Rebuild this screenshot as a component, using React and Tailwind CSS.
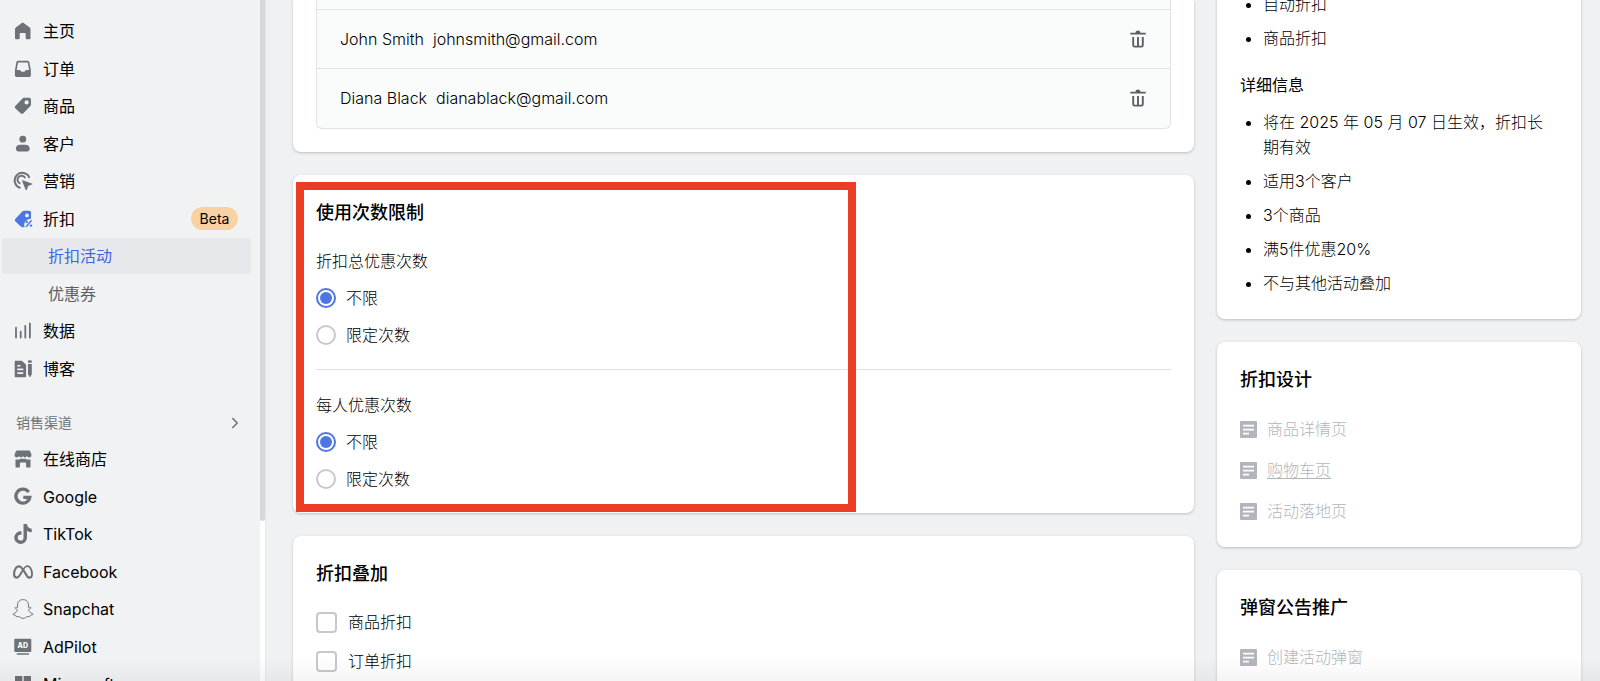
import { useState } from 'react'
import { ChevronRight } from 'lucide-react'
import { FaGoogle, FaTiktok, FaSnapchatGhost } from 'react-icons/fa'
import { SiMeta } from 'react-icons/si'

const MENU = [
  { label: '主页', icon: HomeIcon },
  { label: '订单', icon: InboxIcon },
  { label: '商品', icon: TagIcon },
  { label: '客户', icon: UserIcon },
  { label: '营销', icon: TargetIcon },
  { label: '折扣', icon: DiscountIcon, badge: 'Beta', active: true },
  { label: '折扣活动', sub: true, active: true },
  { label: '优惠券', sub: true },
  { label: '数据', icon: ChartIcon },
  { label: '博客', icon: BlogIcon },
]

const CHANNELS = [
  { label: '在线商店', icon: StoreIcon },
  { label: 'Google', icon: GoogleIcon },
  { label: 'TikTok', icon: TikTokIcon },
  { label: 'Facebook', icon: MetaIcon },
  { label: 'Snapchat', icon: SnapchatIcon },
  { label: 'AdPilot', icon: AdIcon },
  { label: 'Microsoft', icon: MicrosoftIcon },
]

const CUSTOMERS = [
  { name: 'John Smith', email: 'johnsmith@gmail.com' },
  { name: 'Diana Black', email: 'dianablack@gmail.com' },
]

const SUMMARY = ['自动折扣', '商品折扣']
const DETAILS = ['将在 2025 年 05 月 07 日生效，折扣长期有效', '适用3个客户', '3个商品', '满5件优惠20%', '不与其他活动叠加']

export default function App() {
  const [customers, setCustomers] = useState(CUSTOMERS)
  const [total, setTotal] = useState('unlimited')
  const [perUser, setPerUser] = useState('unlimited')

  return (
    <div className="relative flex h-screen overflow-hidden bg-[#f0f1f3] font-['Inter','Noto_Sans_CJK_SC',sans-serif] text-base font-light text-black">
      <Sidebar />

      <main className="flex min-w-0 flex-1 items-start gap-[23px] pl-[27px] pr-[19px]">
        <div className="flex min-w-0 flex-1 flex-col gap-[23px]">
          <section className="rounded-b-lg bg-white px-[23px] pb-[23px] shadow-[0_1px_3px_rgba(0,0,0,0.22)]">
            <ul className="rounded-b-md border border-t-0 border-[#e1e3e5] bg-[#fafcfc] pt-[9px] pb-px">
              {customers.map(c => (
                <li key={c.email} className="flex h-[59px] items-center border-t border-[#e1e3e5] pr-[22px] pl-[23px]">
                  <span className="mr-[9px]">{c.name}</span>
                  <span>{c.email}</span>
                  <button
                    aria-label={`删除 ${c.name}`}
                    onClick={() => setCustomers(list => list.filter(x => x.email !== c.email))}
                    className="ml-auto text-[#5c5f66]"
                  >
                    <TrashIcon />
                  </button>
                </li>
              ))}
            </ul>
          </section>

          <Card className="relative pt-6 pb-[22px]">
            <CardTitle>使用次数限制</CardTitle>
            <LimitGroup className="mt-[22px]" name="total" label="折扣总优惠次数" value={total} onChange={setTotal} />
            <hr className="mt-[22px] mb-[23px] border-[#dfe1e3]" />
            <LimitGroup name="per-user" label="每人优惠次数" value={perUser} onChange={setPerUser} />
            <div className="pointer-events-none absolute top-[7px] left-[3px] h-[330px] w-[560px] border-8 border-[#eb3d24]" />
          </Card>

          <Card className="min-h-[200px] pt-6">
            <CardTitle>折扣叠加</CardTitle>
            <div className="mt-[22px] flex flex-col gap-[15px]">
              {['商品折扣', '订单折扣'].map(text => (
                <label key={text} className="flex h-6 items-center gap-[11px]">
                  <input type="checkbox" className="size-[21px] appearance-none rounded-[4px] border-2 border-[#c6c8cc] bg-white checked:border-[#4f75e5] checked:bg-[#4f75e5]" />
                  {text}
                </label>
              ))}
            </div>
          </Card>
        </div>

        <aside className="-mt-2 flex w-[364px] flex-col gap-[23px]">
          <Card className="pb-[23px]">
            <BulletList items={SUMMARY} />
            <h3 className="mt-[22px] mb-[13px] leading-6 font-normal">详细信息</h3>
            <BulletList items={DETAILS} />
          </Card>

          <Card className="pt-6 pb-6">
            <CardTitle>折扣设计</CardTitle>
            <div className="mt-[23px] flex flex-col gap-[17px]">
              <PageLink>商品详情页</PageLink>
              <PageLink underline>购物车页</PageLink>
              <PageLink>活动落地页</PageLink>
            </div>
          </Card>

          <Card className="min-h-[200px] pt-6">
            <CardTitle>弹窗公告推广</CardTitle>
            <div className="mt-[23px]">
              <PageLink>创建活动弹窗</PageLink>
            </div>
          </Card>
        </aside>
      </main>

      <div className="pointer-events-none absolute inset-x-0 bottom-0 h-6 bg-linear-to-b from-transparent to-black/4" />
    </div>
  )
}

function Sidebar() {
  return (
    <div className="flex w-[266px] shrink-0 border-r border-[#e4e6e9] bg-[#f0f2f4]">
      <nav className="min-w-0 flex-1">
        <ul className="grid h-[388px] auto-rows-fr pt-[13px]">
          {MENU.map(item => <NavItem key={item.label} {...item} />)}
        </ul>
        <button className="mt-[25px] flex h-5 w-full items-center justify-between px-4 text-sm font-normal text-[#6d7178]">
          销售渠道
          <ChevronRight size={18} strokeWidth={2} />
        </button>
        <ul className="mt-[8px] grid h-[263px] auto-rows-fr">
          {CHANNELS.map(item => <NavItem key={item.label} {...item} />)}
        </ul>
      </nav>
      <div className="w-[5px] bg-white">
        <div className="h-[521px] rounded-b-sm bg-[#d5d7db]" />
      </div>
    </div>
  )
}

function NavItem({ label, icon: Icon, badge, sub, active }) {
  if (sub) {
    return (
      <li className="pr-[9px] pl-[2px]">
        <a
          href="#"
          className={`flex h-9 items-center rounded-[3px] pl-[46px] font-normal ${active ? 'bg-[#e6e8ec] text-[#3f66e0]' : 'text-[#5c5f66]'}`}
        >
          {label}
        </a>
      </li>
    )
  }
  return (
    <li className="pr-[22px] pl-[13px]">
      <a href="#" className="flex h-9 items-center gap-[10px] font-normal">
        <span className={active ? 'text-[#4f75e5]' : 'text-[#6d7178]'}><Icon /></span>
        {label}
        {badge && (
          <span className="ml-auto flex h-[23px] w-[47px] items-center justify-center rounded-full bg-[#f9d2a3] text-sm">
            {badge}
          </span>
        )}
      </a>
    </li>
  )
}

function Card({ className = '', children }) {
  return (
    <section className={`rounded-lg bg-white px-[23px] shadow-[0_1px_3px_rgba(0,0,0,0.22)] ${className}`}>
      {children}
    </section>
  )
}

function CardTitle({ children }) {
  return <h2 className="text-lg leading-7 font-medium">{children}</h2>
}

function LimitGroup({ name, label, value, onChange, className = '' }) {
  const options = [
    { id: 'unlimited', text: '不限' },
    { id: 'limited', text: '限定次数' },
  ]
  return (
    <fieldset className={`flex flex-col gap-[13px] ${className}`}>
      <legend className="mb-[13px] leading-6">{label}</legend>
      {options.map(o => (
        <label key={o.id} className="flex h-6 items-center gap-[10px]">
          <input
            type="radio"
            name={name}
            checked={value === o.id}
            onChange={() => onChange(o.id)}
            className="size-5 appearance-none rounded-full border-2 border-[#c6c8cc] bg-white bg-clip-content p-[2px] checked:border-[#4f75e5] checked:bg-[#4f75e5]"
          />
          {o.text}
        </label>
      ))}
    </fieldset>
  )
}

function BulletList({ items }) {
  return (
    <ul className="flex list-disc flex-col gap-[9px] pl-[23px] leading-[25px]">
      {items.map(text => <li key={text}>{text}</li>)}
    </ul>
  )
}

function PageLink({ underline, children }) {
  return (
    <a href="#" className="flex h-6 items-center gap-[10px] text-[#b2b5bb]">
      <PageIcon />
      <span className={underline ? 'underline underline-offset-2' : ''}>{children}</span>
    </a>
  )
}

function Svg({ children, ...props }) {
  return (
    <svg width="20" height="20" viewBox="0 0 20 20" fill="currentColor" {...props}>
      {children}
    </svg>
  )
}

function HomeIcon() {
  return (
    <Svg>
      <path d="M8.8 1.9a1.4 1.4 0 0 1 1.8 0l6.1 4.5c.5.4.8 1 .8 1.6V17a1.2 1.2 0 0 1-1.2 1.2h-2.4A1.2 1.2 0 0 1 12.7 17v-3.9a1 1 0 0 0-1-1H7.7a1 1 0 0 0-1 1V17a1.2 1.2 0 0 1-1.2 1.2H3.2A1.2 1.2 0 0 1 2 17V8c0-.6.3-1.2.8-1.6z" />
    </Svg>
  )
}

function InboxIcon() {
  return (
    <Svg fillRule="evenodd">
      <path d="M5.2 1.800h9.200c1 0 1.800.6 2 1.600l1.500 8.100v4.700c0 1-.8 1.800-1.800 1.800H3.700c-1 0-1.800-.8-1.800-1.800v-4.700l1.400-8.100c.2-1 1-1.600 1.900-1.600zm.3 1.800c-.3 0-.5.2-.6.5L3.700 11h2.600c.6 0 1 .3 1.300.8l.3.5c.2.3.5.5.9.5h2.200c.4 0 .7-.2.9-.5l.3-.5c.3-.5.7-.8 1.300-.8h2.600l-1.200-6.900c-.1-.3-.3-.5-.6-.5z" />
    </Svg>
  )
}

function TagIcon() {
  return (
    <Svg fillRule="evenodd">
      <path d="M11 1.800h5.200c1 0 1.800.8 1.800 1.800v5c0 .5-.2 1-.6 1.400l-7 7.200c-.8.8-2 .8-2.800 0l-5.100-4.700c-.8-.8-.8-2 0-2.800l7-7.300c.4-.4.9-.6 1.500-.6zm2.600 2.500a2.100 2.100 0 1 0 0 4.200 2.100 2.100 0 0 0 0-4.200z" />
    </Svg>
  )
}

function UserIcon() {
  return (
    <Svg>
      <circle cx="9.8" cy="5.2" r="3.4" />
      <path d="M7.200 10.700h5.200c2.500 0 4.300 1.600 4.300 3.900 0 1.600-1 2.900-2.500 2.900H5.400c-1.500 0-2.500-1.300-2.500-2.900 0-2.300 1.800-3.900 4.300-3.900z" />
    </Svg>
  )
}

function TargetIcon() {
  return (
    <Svg>
      <path d="M16.4 6.800A7.600 7.600 0 1 0 7.600 16.900" fill="none" stroke="currentColor" strokeWidth="2" />
      <path d="M12.200 7.200a4 4 0 1 0-4.700 5.400" fill="none" stroke="currentColor" strokeWidth="1.900" />
      <path d="M9.700 9.200l9.200 3.200c.5.200.5.900 0 1.100l-3.700 1.600-1.500 3.800c-.2.500-1 .5-1.100-.1L9.100 9.900c-.1-.4.200-.8.6-.7z" />
    </Svg>
  )
}

function DiscountIcon() {
  return (
    <Svg fillRule="evenodd">
      <path d="M11 1.700h5.200c1 0 1.800.8 1.800 1.800v6.300c-3.300.2-6.400 2.300-6.800 5.700-.1.900.1 1.700.5 2.400-1.400.8-3 .5-4.200-.6l-5-4.700c-.8-.8-.8-2 0-2.800l7-7.500c.4-.4.9-.6 1.500-.6zm3 2.800a1.900 1.900 0 1 0 0 3.800 1.900 1.900 0 0 0 0-3.800z" />
      <path d="M18.200 11.800l-4.800 5.700" stroke="currentColor" strokeWidth="1.400" strokeLinecap="round" />
      <circle cx="13.700" cy="13" r="1.200" />
      <circle cx="18" cy="16.600" r="1.200" />
    </Svg>
  )
}

function ChartIcon() {
  return (
    <Svg>
      <path d="M3 6.700v9.800M7.700 10.700v5.800M12.300 5v11.500M16.900 2.500v14" stroke="currentColor" strokeWidth="1.800" strokeLinecap="round" />
    </Svg>
  )
}

function BlogIcon() {
  return (
    <Svg fillRule="evenodd">
      <path d="M2.700 1.800h6.200l4.200 4v11.400c0 .6-.5 1-1 1H2.700c-.6 0-1-.4-1-1V2.800c0-.6.4-1 1-1zM4.300 6v1.600h3.200V6zm0 3.600v1.600h6V9.600zm0 3.700v1.600h6v-1.600z" />
      <path d="M15 5h3.800v10.300L17 18.500l-2-3.200zM15 3.700V2.600c0-.8.5-1.300 1.200-1.300h1.300c.8 0 1.300.5 1.300 1.300v1.100z" />
    </Svg>
  )
}

function StoreIcon() {
  return (
    <Svg>
      <path d="M4 1.400h12c.5 0 .9.300 1.100.8l1.300 3.200c.4 1.600-.7 3-2.300 3-1 0-1.800-.5-2.200-1.300-.4.800-1.100 1.300-1.900 1.300s-1.600-.5-2-1.300c-.4.800-1.200 1.300-2 1.300s-1.600-.5-2-1.300c-.4.800-1.100 1.300-2.100 1.300-1.600 0-2.700-1.400-2.300-3l1.300-3.200c.2-.5.600-.8 1.100-.8z" />
      <path d="M2.500 10.500h3.300c.8 0 1.300-.3 1.800-.8h4.800c.5.500 1 .8 1.800.8h3.300v6.900c0 .6-.4 1-1 1h-2.400c-.6 0-1-.4-1-1v-2.800c0-.7-.5-1.200-1.200-1.200H8.100c-.7 0-1.200.5-1.200 1.200v2.800c0 .6-.4 1-1 1H3.500c-.6 0-1-.4-1-1z" />
    </Svg>
  )
}

function GoogleIcon() {
  return (
    <Svg viewBox="-1 -1 20 20">
      <path d="M14.600 4.100A7 7 0 1 0 15.800 9.300H9.300" fill="none" stroke="currentColor" strokeWidth="3.300" />
    </Svg>
  )
}

function TikTokIcon() {
  return <FaTiktok size={20} />
}

function MetaIcon() {
  return <SiMeta size={20} />
}

function SnapchatIcon() {
  return <FaSnapchatGhost size={20} className="overflow-visible fill-none stroke-current [stroke-width:24]" />
}

function AdIcon() {
  return (
    <Svg>
      <rect x="1.300" y="1.800" width="17" height="13.200" rx="1" />
      <rect x="3.600" y="16.200" width="12.600" height="1.600" rx=".8" />
      <text x="9.800" y="11" textAnchor="middle" fontSize="7" fontWeight="800" fill="#fff">AD</text>
    </Svg>
  )
}

function MicrosoftIcon() {
  return (
    <Svg>
      <path d="M2 2h7.300v7.300H2zM10.700 2H18v7.300h-7.300zM2 10.700h7.300V18H2zM10.700 10.700H18V18h-7.300z" />
    </Svg>
  )
}

function TrashIcon() {
  return (
    <Svg>
      <path d="M2.300 3.700h5.200c.3-1.300 1.200-2.200 2.500-2.200s2.200.9 2.500 2.200h5.200v1.900H2.300z" />
      <path d="M5.200 8v8.200c0 .8.600 1.400 1.400 1.400h6.800c.8 0 1.400-.6 1.400-1.400V8M10 8v9.300" fill="none" stroke="currentColor" strokeWidth="1.900" />
    </Svg>
  )
}

function PageIcon() {
  return (
    <svg width="17" height="17" viewBox="0 0 17 17" fill="currentColor" fillRule="evenodd">
      <path d="M1 0h15a1 1 0 0 1 1 1v15a1 1 0 0 1-1 1H1a1 1 0 0 1-1-1V1a1 1 0 0 1 1-1zm2 3.700v1.800h11V3.700zm0 4v1.800h11V7.700zm0 4v1.800h6v-1.800z" />
    </svg>
  )
}
